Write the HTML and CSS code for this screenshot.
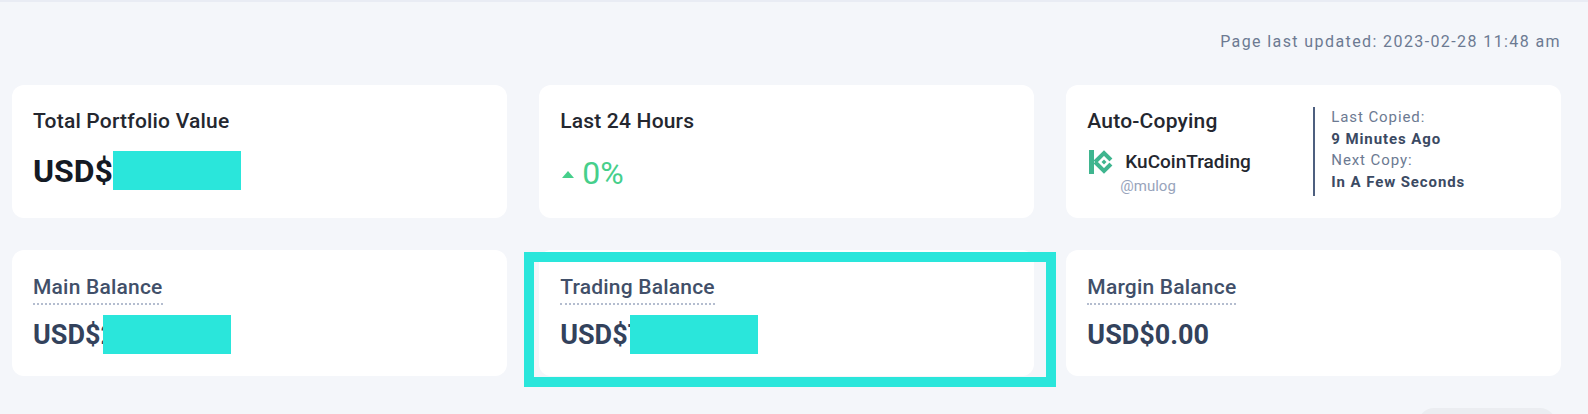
FILE: index.html
```html
<!DOCTYPE html>
<html>
<head>
  <title>Portfolio</title>
  <meta name="viewport" content="width=device-width, initial-scale=1.0">
  <link rel="stylesheet" href="styles.css">
</head>
<body>
  <div class="page">
    <p class="updated">Page last updated: 2023-02-28 11:48 am</p>

    <div class="summary">
      <div class="card">
        <h3>Total Portfolio Value</h3>
        <div class="total">USD$<span class="redact"></span></div>
      </div>

      <div class="card">
        <h3>Last 24 Hours</h3>
        <div class="change"><span class="arrow"></span>0%</div>
      </div>

      <div class="card copying">
        <div class="copy-left">
          <h3>Auto-Copying</h3>
          <div class="trader">
            <svg class="logo" viewBox="0 0 24 26" width="24" height="26">
              <path d="M0 1h5v24H0z" fill="#3fb58f"/>
              <path d="M6 13l9-9 7 7M6 13l9 9 7-7" fill="none" stroke="#3fb58f" stroke-width="4"/>
              <path d="M15 10.500l2.500 2.500-2.500 2.500-2.500-2.500z" fill="#3fb58f"/>
              <path d="M20 13l4-3.500v7z" fill="#fff"/>
            </svg>
            <span class="trader-name">KuCoinTrading</span>
          </div>
          <div class="handle">@mulog</div>
        </div>
        <div class="copy-right">
          <div>Last Copied:</div>
          <strong>9 Minutes Ago</strong>
          <div>Next Copy:</div>
          <strong>In A Few Seconds</strong>
        </div>
      </div>
    </div>

    <div class="balances">
      <div class="card balance">
        <span class="label">Main Balance</span>
        <div class="amount">USD$2<span class="redact"></span></div>
      </div>

      <div class="card balance">
        <span class="label">Trading Balance</span>
        <div class="amount">USD$7<span class="redact"></span></div>
        <div class="highlight"></div>
      </div>

      <div class="card balance">
        <span class="label">Margin Balance</span>
        <div class="amount">USD$0.00</div>
      </div>
    </div>

    <div class="more-row"><div class="more"></div></div>
  </div>
</body>
</html>
```

FILE: styles.css
```css
body {
  background-color: #f4f6fa;
  margin: 0;
  padding: 0;
  font-family: Roboto, "Liberation Sans", sans-serif;
  overflow: hidden;
}

.page {
  border-top: 2px solid #e9ecf4;
  height: 412px;
  padding: 0 27px 0 12px;
  overflow: hidden;
}

.updated {
  margin: 31px 0 0;
  height: 18px;
  text-align: right;
  font-size: 16px;
  line-height: 18px;
  letter-spacing: 1.400px;
  color: #6c7a92;
}

.summary,
.balances {
  display: grid;
  grid-template-columns: repeat(3, 1fr);
  gap: 32.500px;
}

.summary {
  margin-top: 34px;
}

.balances {
  margin-top: 32px;
}

.card {
  position: relative;
  background-color: #fff;
  border-radius: 12px;
  height: 133px;
  padding: 24px 21px 0;
  box-sizing: border-box;
}

h3 {
  margin: 0;
  font-size: 21px;
  line-height: 24px;
  font-weight: 500;
  letter-spacing: 0.200px;
  color: #24272f;
}

.total {
  display: flex;
  margin-top: 18px;
  height: 39px;
  align-items: center;
  font-size: 32px;
  font-weight: 700;
  color: #141a24;
}

.redact {
  display: block;
  width: 128px;
  height: 39px;
  background-color: #2ae6db;
}

.change {
  display: flex;
  align-items: center;
  margin-top: 22px;
  font-size: 32px;
  line-height: 36px;
  color: #46cf8b;
}

.arrow {
  width: 0;
  height: 0;
  margin: 2px 8px 0 2px;
  border-left: 6px solid transparent;
  border-right: 6px solid transparent;
  border-bottom: 7px solid #46cf8b;
}

.copying {
  display: flex;
}

.copy-left {
  width: 226px;
  flex-shrink: 0;
}

.trader {
  display: flex;
  align-items: center;
  margin-top: 16px;
}

.logo {
  margin: 0 12px 0 2px;
}

.trader-name {
  margin-bottom: 2px;
  font-size: 19px;
  font-weight: 500;
  color: #24272f;
}

.handle {
  margin: 2px 0 0 33px;
  font-size: 15px;
  line-height: 18px;
  color: #98a4bb;
}

.copy-right {
  height: 89px;
  margin-top: -2px;
  padding-left: 16px;
  border-left: 2px solid #4d5f7f;
  font-size: 15px;
  line-height: 21.500px;
  letter-spacing: 0.900px;
  color: #6c7a92;
}

.copy-right strong {
  display: block;
  font-weight: 700;
  color: #3b4a63;
}

.balance {
  height: 126px;
  padding-top: 25px;
}

.label {
  display: inline-block;
  padding-bottom: 4px;
  font-size: 21px;
  line-height: 24px;
  font-weight: 500;
  letter-spacing: 0.200px;
  color: #414f69;
  border-bottom: 2px dotted #b4bdcf;
}

.amount {
  display: flex;
  align-items: center;
  margin-top: 10px;
  height: 39px;
  font-size: 27px;
  font-weight: 700;
  color: #33425c;
}

.amount .redact {
  margin-left: -13px;
}

.highlight {
  position: absolute;
  left: -15px;
  right: -22px;
  top: 2px;
  bottom: -11px;
  border: 10px solid #2ae6db;
}

.more-row {
  display: flex;
  justify-content: flex-end;
  margin-top: 32px;
}

.more {
  width: 138px;
  height: 40px;
  margin-right: 5px;
  border-radius: 16px;
  background-color: #ebedf1;
}
```
